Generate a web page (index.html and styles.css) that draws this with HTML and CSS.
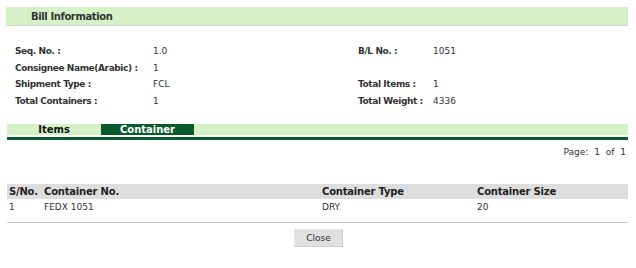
FILE: index.html
```html
<!DOCTYPE html>
<html>
<head>
<meta charset="utf-8">
<link rel="stylesheet" href="styles.css">
</head>
<body>
<div class="page">
  <div class="section-head">Bill Information</div>
  <div class="info">
    <div class="lbl">Seq. No. :</div><div class="val">1.0</div>
    <div class="lbl">B/L No. :</div><div class="val">1051</div>
    <div class="lbl">Consignee Name(Arabic) :</div><div class="val">1</div>
    <div class="lbl"></div><div class="val"></div>
    <div class="lbl">Shipment Type :</div><div class="val">FCL</div>
    <div class="lbl">Total Items :</div><div class="val">1</div>
    <div class="lbl">Total Containers :</div><div class="val">1</div>
    <div class="lbl">Total Weight :</div><div class="val">4336</div>
  </div>
  <div class="tabs">
    <div class="tabbar">
      <div class="tab">Items</div>
      <div class="tab active">Container</div>
    </div>
  </div>
  <div class="pager">Page: 1 of 1</div>
  <table class="grid">
    <thead>
      <tr><th class="c1">S/No.</th><th class="c2">Container No.</th><th class="c3">Container Type</th><th class="c4">Container Size</th></tr>
    </thead>
    <tbody>
      <tr><td>1</td><td>FEDX 1051</td><td>DRY</td><td>20</td></tr>
    </tbody>
  </table>
  <div class="footer">
    <button class="btn">Close</button>
  </div>
</div>
</body>
</html>
```

FILE: styles.css
```css
html, body {
  margin: 0;
  padding: 0;
  background: #ffffff;
}
body {
  font-family: "DejaVu Sans", Verdana, sans-serif;
  font-size: 9px;
  color: #222222;
}
.page {
  padding: 7px 8px 0 6px;
}
.section-head {
  height: 19px;
  line-height: 19px;
  background: #d4f1c8;
  border-bottom: 1px solid #c9d9c3;
  box-sizing: border-box;
  padding-left: 25px;
  font-weight: bold;
  font-size: 10px;
  letter-spacing: -0.4px;
  color: #333333;
}
.info {
  display: grid;
  grid-template-columns: 138px 205px 75px 1fr;
  grid-auto-rows: 16.6px;
  align-items: center;
  padding: 17px 0 0 9px;
}
.lbl {
  font-weight: bold;
  white-space: nowrap;
  letter-spacing: -0.4px;
  color: #333333;
}
.val {
  white-space: nowrap;
  color: #333333;
}
.tabs {
  margin: 15px 0 0 1px;
  padding-bottom: 2px;
  border-bottom: 3px solid #0b5a2b;
}
.tabbar {
  display: flex;
  height: 11px;
  background: #d4f1c8;
}
.tab {
  width: 94px;
  text-align: center;
  font-weight: bold;
  font-size: 10px;
  line-height: 11px;
  color: #111111;
}
.tab.active {
  width: 93px;
  background: #0b5a2b;
  color: #ffffff;
}
.pager {
  text-align: right;
  padding: 5px 2px 0 0;
  height: 14px;
  line-height: 14px;
  word-spacing: 3px;
  color: #333333;
}
.grid {
  margin: 25px 0 0 1px;
  width: calc(100% - 1px);
  border-collapse: collapse;
  border-bottom: 1.5px solid #c8c8c8;
}
.grid th {
  background: #dedede;
  text-align: left;
  font-size: 10px;
  font-weight: bold;
  letter-spacing: -0.2px;
  color: #222222;
  height: 15px;
  line-height: 15px;
  padding: 0 0 0 2px;
  white-space: nowrap;
}
.grid td {
  text-align: left;
  height: 16px;
  padding: 0 0 7px 2px;
  vertical-align: top;
  line-height: 16px;
  color: #333333;
}
.grid .c1 { width: 33px; }
.grid .c2 { width: 276px; }
.grid .c3 { width: 153px; }
.footer {
  display: flex;
  justify-content: center;
  padding-top: 6px;
}
.btn {
  width: 49px;
  height: 18px;
  padding: 0;
  margin-left: 3px;
  border: 1px solid #e6e6e6;
  border-bottom-color: #cfcfcf;
  border-right-color: #cfcfcf;
  background: #e0e0e0;
  font-family: "DejaVu Sans", Verdana, sans-serif;
  font-size: 9px;
  color: #333333;
}
```
